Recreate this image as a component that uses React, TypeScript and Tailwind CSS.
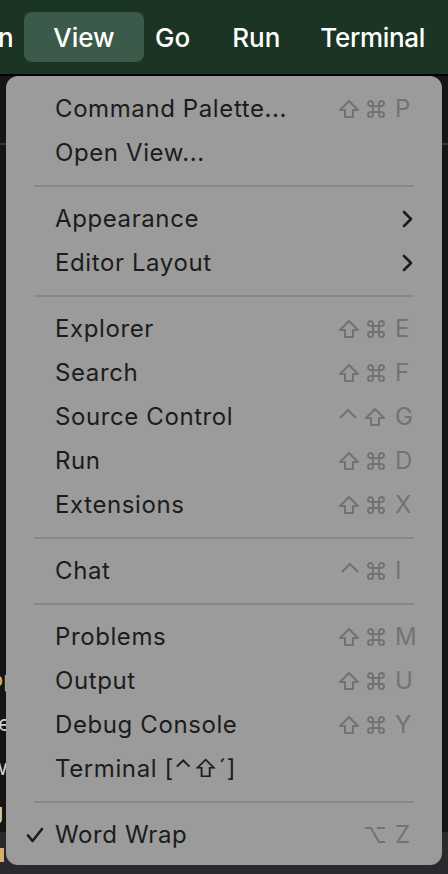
import React from "react";

type Mod = "shift" | "cmd" | "ctrl" | "opt";

type Item =
  | { kind: "item"; label: string; mods?: Mod[]; keyChar?: string; submenu?: boolean; checked?: boolean }
  | { kind: "sep" };

const items: Item[] = [
  { kind: "item", label: "Command Palette...", mods: ["shift", "cmd"], keyChar: "P" },
  { kind: "item", label: "Open View..." },
  { kind: "sep" },
  { kind: "item", label: "Appearance", submenu: true },
  { kind: "item", label: "Editor Layout", submenu: true },
  { kind: "sep" },
  { kind: "item", label: "Explorer", mods: ["shift", "cmd"], keyChar: "E" },
  { kind: "item", label: "Search", mods: ["shift", "cmd"], keyChar: "F" },
  { kind: "item", label: "Source Control", mods: ["ctrl", "shift"], keyChar: "G" },
  { kind: "item", label: "Run", mods: ["shift", "cmd"], keyChar: "D" },
  { kind: "item", label: "Extensions", mods: ["shift", "cmd"], keyChar: "X" },
  { kind: "sep" },
  { kind: "item", label: "Chat", mods: ["ctrl", "cmd"], keyChar: "I" },
  { kind: "sep" },
  { kind: "item", label: "Problems", mods: ["shift", "cmd"], keyChar: "M" },
  { kind: "item", label: "Output", mods: ["shift", "cmd"], keyChar: "U" },
  { kind: "item", label: "Debug Console", mods: ["shift", "cmd"], keyChar: "Y" },
  { kind: "item", label: "Terminal [⌃⇧´]" },
  { kind: "sep" },
  { kind: "item", label: "Word Wrap", mods: ["opt"], keyChar: "Z", checked: true },
];

const ModIcon = ({ mod }: { mod: Mod }) => {
  const stroke = "#727272";
  if (mod === "shift") {
    return (
      <svg width="22" height="20" viewBox="0 0 22 20" fill="none">
        <path
          d="M11 2 L20 11 L15 11 L15 18 L7 18 L7 11 L2 11 Z"
          stroke={stroke}
          strokeWidth="2"
          strokeLinejoin="round"
        />
      </svg>
    );
  }
  if (mod === "cmd") {
    return (
      <svg width="20" height="20" viewBox="0 0 20 20" fill="none">
        <path
          d="M7 7 L13 7 L13 13 L7 13 Z M7 7 L7 4.5 A2.5 2.5 0 1 0 4.5 7 Z M13 7 L15.5 7 A2.5 2.5 0 1 0 13 4.5 Z M13 13 L13 15.5 A2.5 2.5 0 1 0 15.5 13 Z M7 13 L4.5 13 A2.5 2.5 0 1 0 7 15.5 Z"
          stroke={stroke}
          strokeWidth="2"
          strokeLinejoin="round"
        />
      </svg>
    );
  }
  if (mod === "ctrl") {
    return (
      <svg width="20" height="20" viewBox="0 0 20 20" fill="none">
        <path d="M2 11 L10 3 L18 11" stroke={stroke} strokeWidth="2.2" />
      </svg>
    );
  }
  return (
    <svg width="22" height="20" viewBox="0 0 22 20" fill="none">
      <path d="M1 3 L7 3 L15 17 L21 17 M13 3 L21 3" stroke={stroke} strokeWidth="2" />
    </svg>
  );
};

const Shortcut = ({ mods, keyChar }: { mods: Mod[]; keyChar: string }) => (
  <div className="flex items-center">
    <div className="flex items-center gap-[6px]">
      {mods.map((m, i) => (
        <ModIcon key={i} mod={m} />
      ))}
    </div>
    <div className="w-[19px] ml-[9px] text-[#737373] text-[24px] leading-none tracking-normal">{keyChar}</div>
  </div>
);

const Chevron = () => (
  <svg width="12" height="18" viewBox="0 0 12 18" fill="none">
    <path d="M2 2 L9 9 L2 16" stroke="#1c1c1c" strokeWidth="2.6" strokeLinecap="round" strokeLinejoin="round" />
  </svg>
);

const Check = () => (
  <svg width="18" height="16" viewBox="0 0 18 16" fill="none">
    <path d="M2 8.5 L6.5 14 L16 2" stroke="#1c1c1c" strokeWidth="2.6" strokeLinecap="round" strokeLinejoin="round" />
  </svg>
);

export default function App() {
  return (
    <div
      className="relative w-[448px] h-[874px] overflow-hidden bg-[#151515]"
      style={{ fontFamily: "Inter, 'Noto Sans', 'DejaVu Sans', sans-serif" }}
    >
      {/* menu bar */}
      <div className="h-[74px] bg-[#1b3424] flex items-center text-white text-[26px] font-medium">
        <div className="ml-[-2px] w-[16px] overflow-hidden">n</div>
        <div className="ml-[10px] h-[50px] w-[120px] rounded-[8px] bg-[#3c5a49] flex items-center justify-center">
          View
        </div>
        <div className="ml-[11px]">Go</div>
        <div className="ml-[42px]">Run</div>
        <div className="ml-[40px] tracking-[-0.3px]">Terminal</div>
      </div>
      <div className="h-[2px] bg-black" />

      {/* editor background */}
      <div className="h-[67px]" />
      <div className="h-[2px] bg-[#333333]" />
      <div className="flex flex-col text-[22px] leading-[44px] text-[#cfcfcf] ml-[-10px] mt-[512px]">
        <div className="text-[#d7b06a]">op</div>
        <div>re</div>
        <div>w</div>
        <div>g</div>
      </div>
      <div className="absolute left-0 right-0 bottom-0 h-[42px] bg-[#2a2a2e]">
        <div className="mt-[16px] w-[4px] h-[14px] bg-[#d7b06a]" />
      </div>

      {/* dropdown */}
      <div className="absolute left-[6px] top-[76px] w-[436px] h-[789px] rounded-[12px] bg-[#9a9b9a] pt-[11px] text-[#1c1c1c] text-[24px] tracking-[0.6px]">
        {items.map((it, i) =>
          it.kind === "sep" ? (
            <div key={i} className="h-[22px] flex items-center px-[28px]">
              <div className="h-[2px] w-full bg-[#868786]" />
            </div>
          ) : (
            <div key={i} className="h-[44px] flex items-center pr-[28px]">
              <div className="w-[49px] flex justify-end pr-[11px]">{it.checked ? <Check /> : null}</div>
              <div className="flex-1 leading-none">{it.label}</div>
              {it.submenu ? <Chevron /> : null}
              {it.mods && it.keyChar ? <Shortcut mods={it.mods} keyChar={it.keyChar} /> : null}
            </div>
          )
        )}
      </div>
    </div>
  );
}
